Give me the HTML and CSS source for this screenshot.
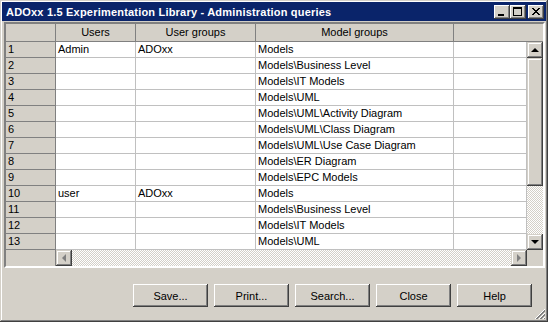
FILE: index.html
```html
<!DOCTYPE html>
<html lang="en">
<head>
  <meta charset="UTF-8">
  <title>ADOxx 1.5 Experimentation Library - Administration queries</title>
  <link rel="stylesheet" href="styles.css">
</head>
<body>
  <div class="window">
    <div class="titlebar">
      <span class="title">ADOxx 1.5 Experimentation Library - Administration queries</span>
      <div class="caption-buttons">
        <div class="cap-btn">
          <svg width="16" height="14" viewBox="0 0 16 14"><rect x="4" y="9" width="6" height="2" fill="#000"/></svg>
        </div>
        <div class="cap-btn">
          <svg width="16" height="14" viewBox="0 0 16 14"><rect x="3.5" y="2.5" width="8" height="8" fill="none" stroke="#000"/><rect x="3" y="2" width="9" height="2" fill="#000"/></svg>
        </div>
        <div class="cap-btn close">
          <svg width="16" height="14" viewBox="0 0 16 14"><path d="M4 3 L11 10 M5 3 L12 10 M11 3 L4 10 M12 3 L5 10" stroke="#000" stroke-width="1"/></svg>
        </div>
      </div>
    </div>

    <div class="grid-frame">
      <div class="grid-header">
        <div class="hcell c-fixed"></div>
        <div class="hcell c-users">Users</div>
        <div class="hcell c-groups">User groups</div>
        <div class="hcell c-models">Model groups</div>
        <div class="hcell c-last"></div>
      </div>
      <div class="grid-body">
        <div class="rows" id="rows"></div>
        <div class="vscroll">
          <div class="sb-btn"><span class="arrow up"></span></div>
          <div class="sb-thumb"></div>
          <div class="sb-track"></div>
          <div class="sb-btn"><span class="arrow down"></span></div>
        </div>
      </div>
      <div class="grid-footer">
        <div class="fixed-spacer"></div>
        <div class="hscroll">
          <div class="sb-btn"><span class="arrow left"></span></div>
          <div class="sb-track"></div>
          <div class="sb-btn"><span class="arrow right"></span></div>
        </div>
        <div class="corner"></div>
      </div>
    </div>

    <div class="button-bar">
      <button class="btn">Save...</button>
      <button class="btn">Print...</button>
      <button class="btn">Search...</button>
      <button class="btn">Close</button>
      <button class="btn">Help</button>
    </div>

    <svg class="size-grip" width="12" height="12" viewBox="0 0 12 12">
      <path d="M11 1 L1 11 M11 5 L5 11 M11 9 L9 11" stroke="#fff" stroke-width="1"/>
      <path d="M11 2 L2 11 M11 3 L3 11 M11 6 L6 11 M11 7 L7 11 M11 10 L10 11" stroke="#808080" stroke-width="1"/>
    </svg>
  </div>

  <script>
    const data = [
      ["Admin", "ADOxx", "Models"],
      ["", "", "Models\\Business Level"],
      ["", "", "Models\\IT Models"],
      ["", "", "Models\\UML"],
      ["", "", "Models\\UML\\Activity Diagram"],
      ["", "", "Models\\UML\\Class Diagram"],
      ["", "", "Models\\UML\\Use Case Diagram"],
      ["", "", "Models\\ER Diagram"],
      ["", "", "Models\\EPC Models"],
      ["user", "ADOxx", "Models"],
      ["", "", "Models\\Business Level"],
      ["", "", "Models\\IT Models"],
      ["", "", "Models\\UML"],
    ];

    const rows = document.getElementById("rows");
    data.forEach((item, i) => {
      const row = document.createElement("div");
      row.className = "row";
      row.innerHTML = `<div class="cell c-fixed">${i + 1}</div>` +
        `<div class="cell">${item[0]}</div>` +
        `<div class="cell">${item[1]}</div>` +
        `<div class="cell">${item[2]}</div>` +
        `<div class="cell"></div>`;
      rows.appendChild(row);
    });
  </script>
</body>
</html>
```

FILE: styles.css
```css
/* Windows classic dialog */
body {
  margin: 0;
  font-family: "Liberation Sans", Arial, sans-serif;
  font-size: 11px;
  color: #000;
}
*, *:before, *:after {
  box-sizing: border-box;
}
.window {
  position: relative;
  width: 548px;
  height: 322px;
  background: #d4d0c8;
  padding: 2px;
  display: flex;
  flex-direction: column;
  box-shadow: inset -1px -1px #404040, inset 1px 1px #d4d0c8, inset -2px -2px #808080, inset 2px 2px #fff;
}
.titlebar {
  height: 19px;
  background: #0a246a;
  display: flex;
  align-items: center;
  justify-content: space-between;
  padding: 0 2px 0 4px;
}
.title {
  color: #fff;
  font-weight: bold;
  font-size: 11px;
  letter-spacing: 0.2px;
}
.caption-buttons {
  display: flex;
  align-items: center;
}
.cap-btn {
  width: 16px;
  height: 14px;
  background: #d4d0c8;
  box-shadow: inset -1px -1px #404040, inset 1px 1px #fff, inset -2px -2px #808080;
}
.cap-btn svg {
  display: block;
}
.cap-btn.close {
  margin-left: 2px;
}

/* grid */
.grid-frame {
  margin: 1px 1px 0 2px;
  border-style: solid;
  border-width: 2px;
  border-color: #808080 #fff #fff #808080;
  box-shadow: inset 1px 1px #404040, inset -1px -1px #d4d0c8;
  display: flex;
  flex-direction: column;
  padding: 0;
}
.grid-header {
  display: flex;
  height: 18px;
  background: #d4d0c8;
  border-bottom: 1px solid #808080;
}
.hcell {
  text-align: center;
  line-height: 16px;
  border-right: 1px solid #808080;
}
.c-fixed { width: 50px; }
.c-users { width: 80px; }
.c-groups { width: 120px; }
.c-models { width: 198px; }
.c-last { flex: 1; border-right: none; }

.grid-body {
  display: flex;
}
.rows {
  width: 521px;
  background: #fff;
}
.row {
  display: grid;
  grid-template-columns: 50px 80px 120px 198px 73px;
  height: 16px;
}
.cell {
  border-right: 1px solid #c0c0c0;
  border-bottom: 1px solid #c0c0c0;
  padding-left: 2px;
  line-height: 15px;
  white-space: nowrap;
  overflow: hidden;
}
.cell.c-fixed {
  width: auto;
  background: #d4d0c8;
  border-color: #808080;
}

/* scrollbars */
.vscroll {
  width: 16px;
  display: flex;
  flex-direction: column;
}
.sb-btn {
  width: 16px;
  height: 16px;
  flex: none;
  background: #d4d0c8;
  box-shadow: inset -1px -1px #404040, inset 1px 1px #d4d0c8, inset -2px -2px #808080, inset 2px 2px #fff;
  display: flex;
  align-items: center;
  justify-content: center;
}
.sb-thumb {
  height: 128px;
  background: #d4d0c8;
  box-shadow: inset -1px -1px #404040, inset 1px 1px #d4d0c8, inset -2px -2px #808080, inset 2px 2px #fff;
}
.sb-track {
  flex: 1;
  background: repeating-conic-gradient(#d4d0c8 0 25%, #fff 0 50%) 0 0 / 2px 2px;
}
.arrow {
  width: 0;
  height: 0;
  border: 4px solid transparent;
}
.arrow.up { border-bottom-color: #000; margin-top: -4px; }
.arrow.down { border-top-color: #000; margin-bottom: -4px; }
.arrow.left { border-right-color: #808080; margin-left: -4px; }
.arrow.right { border-left-color: #808080; margin-right: -4px; }

.grid-footer {
  display: flex;
  height: 16px;
}
.fixed-spacer {
  width: 50px;
  background: #d4d0c8;
  border-right: 1px solid #808080;
}
.hscroll {
  width: 471px;
  display: flex;
}
.corner {
  flex: 1;
  background: #d4d0c8;
}

/* bottom buttons */
.button-bar {
  display: flex;
  justify-content: flex-end;
  gap: 6px;
  padding: 16px 14px 0 0;
}
.btn {
  width: 75px;
  height: 23px;
  background: #d4d0c8;
  border: none;
  font-family: "Liberation Sans", Arial, sans-serif;
  font-size: 11px;
  color: #000;
  padding: 0;
  box-shadow: inset -1px -1px #404040, inset 1px 1px #fff, inset -2px -2px #808080, inset 2px 2px #d4d0c8;
}
.size-grip {
  position: absolute;
  right: 2px;
  bottom: 2px;
}
```
